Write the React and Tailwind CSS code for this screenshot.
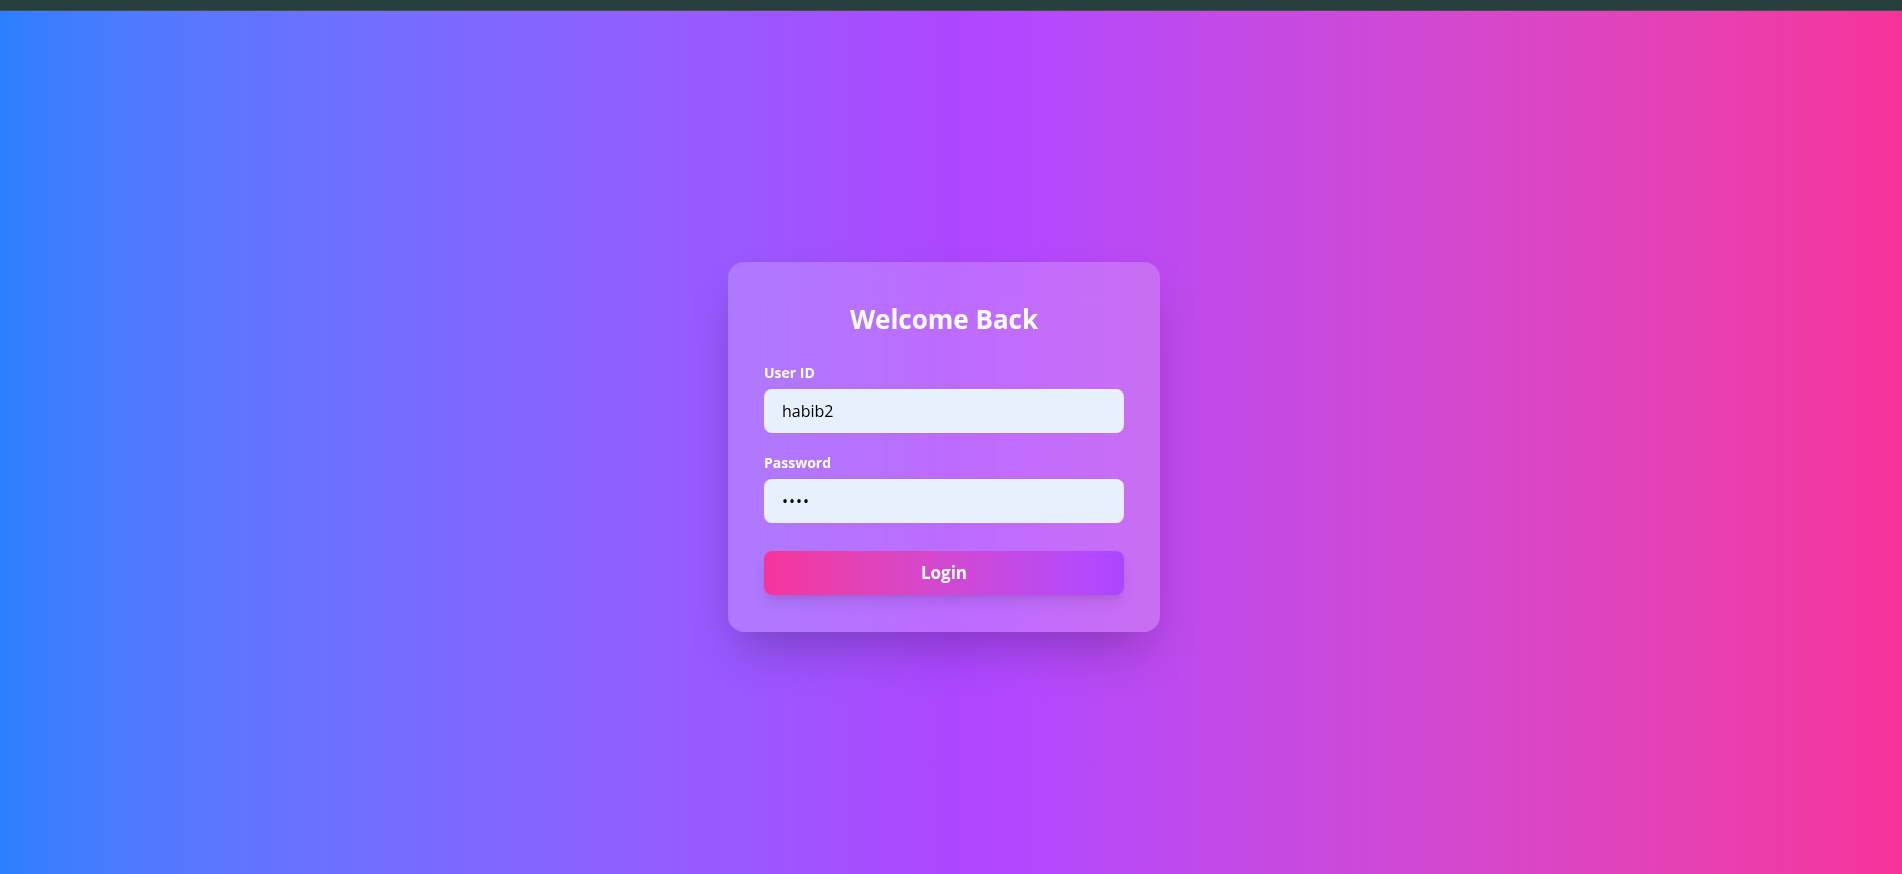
import React, { useState } from "react";

// Login screen on a full-width gradient, glassy card in the middle
export default function App() {
  const [userId, setUserId] = useState("habib2");
  const [password, setPassword] = useState("1234");

  return (
    <div className="min-h-screen flex flex-col" style={{ fontFamily: '"Open Sans", "Noto Sans", sans-serif' }}>
      <div className="h-[11px] bg-[#263f3c] border-b border-[#474d4b]" />
      <div className="flex-1 h-[862px] flex items-center justify-center pt-[8px] pr-[14px] bg-gradient-to-r from-blue-500 via-purple-500 to-pink-500">
        <div className="w-[432px] px-9 pt-[37px] pb-[37px] rounded-2xl bg-white/20 backdrop-blur-lg shadow-2xl">
          <h1 className="pt-[4px] text-[26px] leading-8 font-bold text-white text-center mb-[28px]">Welcome Back</h1>

          <Field label="User ID">
            <input
              value={userId}
              onChange={(e) => setUserId(e.target.value)}
              className="w-full h-11 pl-[18px] pr-4 rounded-lg bg-[#e8f0fe] text-black text-base outline-none"
            />
          </Field>

          <div className="h-5" />

          <Field label="Password">
            <input
              type="password"
              value={password}
              onChange={(e) => setPassword(e.target.value)}
              className="w-full h-11 pl-[18px] pr-4 rounded-lg bg-[#e8f0fe] text-black text-base tracking-[1px] outline-none"
            />
          </Field>

          <button className="mt-7 w-full h-11 rounded-lg bg-gradient-to-r from-pink-500 to-purple-500 text-white font-bold text-[17px] shadow-lg">
            Login
          </button>
        </div>
      </div>
    </div>
  );
}

function Field({ label, children }) {
  return (
    <div>
      <label className="block text-sm leading-5 font-bold text-white mb-1.5">{label}</label>
      {children}
    </div>
  );
}
